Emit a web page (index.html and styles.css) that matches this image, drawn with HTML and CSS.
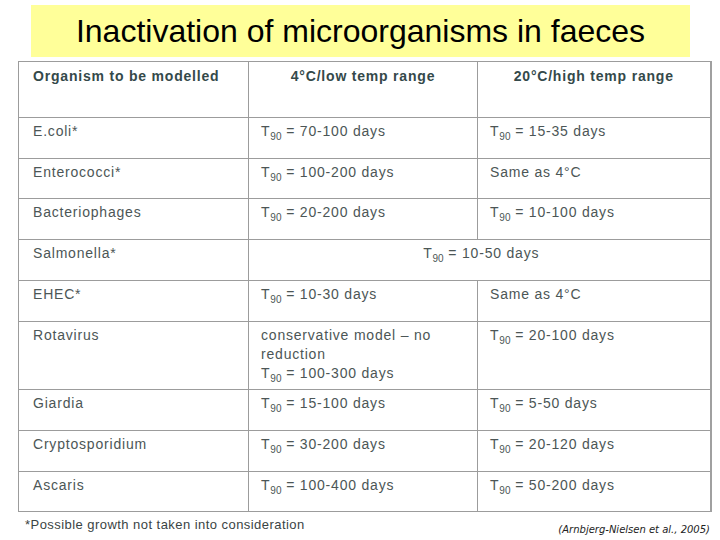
FILE: index.html
```html
<!DOCTYPE html>
<html>
<head>
<meta charset="utf-8">
<link rel="stylesheet" href="styles.css">
</head>
<body>
<div class="slide">
  <div class="title-bar"><h1 class="title">Inactivation of microorganisms in faeces</h1></div>
  <table class="data">
    <colgroup><col class="c1"><col class="c2"><col class="c3"></colgroup>
    <tr class="head r56">
      <th class="left">Organism to be modelled</th>
      <th>4°C/low temp range</th>
      <th>20°C/high temp range</th>
    </tr>
    <tr class="r41"><td>E.coli*</td><td>T<sub>90</sub> = 70-100 days</td><td>T<sub>90</sub> = 15-35 days</td></tr>
    <tr class="r40"><td>Enterococci*</td><td>T<sub>90</sub> = 100-200 days</td><td>Same as 4°C</td></tr>
    <tr class="r41"><td>Bacteriophages</td><td>T<sub>90</sub> = 20-200 days</td><td>T<sub>90</sub> = 10-100 days</td></tr>
    <tr class="r41"><td>Salmonella*</td><td colspan="2" class="center">T<sub>90</sub> = 10-50 days</td></tr>
    <tr class="r41"><td>EHEC*</td><td>T<sub>90</sub> = 10-30 days</td><td>Same as 4°C</td></tr>
    <tr class="r68"><td>Rotavirus</td><td>conservative model – no reduction<br>T<sub>90</sub> = 100-300 days</td><td>T<sub>90</sub> = 20-100 days</td></tr>
    <tr class="r41"><td>Giardia</td><td>T<sub>90</sub> = 15-100 days</td><td>T<sub>90</sub> = 5-50 days</td></tr>
    <tr class="r41"><td>Cryptosporidium</td><td>T<sub>90</sub> = 30-200 days</td><td>T<sub>90</sub> = 20-120 days</td></tr>
    <tr class="r40"><td>Ascaris</td><td>T<sub>90</sub> = 100-400 days</td><td>T<sub>90</sub> = 50-200 days</td></tr>
  </table>
  <div class="foot">
    <span class="note">*Possible growth not taken into consideration</span>
    <span class="cite">(Arnbjerg-Nielsen et al., 2005)</span>
  </div>
</div>
</body>
</html>
```
FILE: styles.css
```css
html, body {
  margin: 0;
  padding: 0;
  background: #ffffff;
}
.slide {
  width: 720px;
  height: 540px;
  padding-top: 5px;
  box-sizing: border-box;
  font-family: "Liberation Sans", Arial, sans-serif;
}
.title-bar {
  margin-left: 31px;
  width: 659px;
  height: 52px;
  background: #ffff99;
  display: flex;
  align-items: center;
  justify-content: center;
}
.title {
  margin: 0;
  font-weight: normal;
  font-size: 32px;
  color: #000;
  white-space: nowrap;
}
.data {
  margin-top: 4px;
  margin-left: 18px;
  width: 692px;
  border-collapse: collapse;
  table-layout: fixed;
  color: #4c5656;
}
.c1 { width: 230px; }
.c2 { width: 229px; }
.c3 { width: 233px; }
.data th, .data td {
  border: 1px solid #9c9c9c;
  vertical-align: top;
  padding: 0;
  text-align: left;
}
.data tr > :last-child {
  border-right: 2px solid #a0a0a0;
}
.data td {
  font-size: 14px;
  line-height: 19px;
  padding: 4px 8px 0 12px;
  letter-spacing: 0.8px;
}
.data td:first-child {
  padding-left: 14px;
}
.data th {
  font-size: 14px;
  font-weight: bold;
  color: #34494a;
  text-align: center;
  padding-top: 5px;
  line-height: 18px;
  letter-spacing: 0.8px;
}
.data th.left {
  text-align: left;
  padding-left: 14px;
}
.data td.center {
  text-align: center;
}
.data sub {
  font-size: 10px;
  line-height: 0;
  vertical-align: -4px;
  letter-spacing: 0;
}
.r56 { height: 56px; }
.r41 { height: 41px; }
.r40 { height: 40px; }
.r68 { height: 68px; }
.foot {
  margin-left: 25px;
  width: 685px;
  display: flex;
  justify-content: space-between;
  align-items: flex-start;
  padding-top: 5px;
}
.note {
  font-size: 13px;
  color: #3a4444;
  letter-spacing: 0.45px;
}
.cite {
  font-family: "DejaVu Sans", sans-serif;
  font-style: italic;
  font-size: 10px;
  color: #222;
  padding-top: 7px;
}
```
